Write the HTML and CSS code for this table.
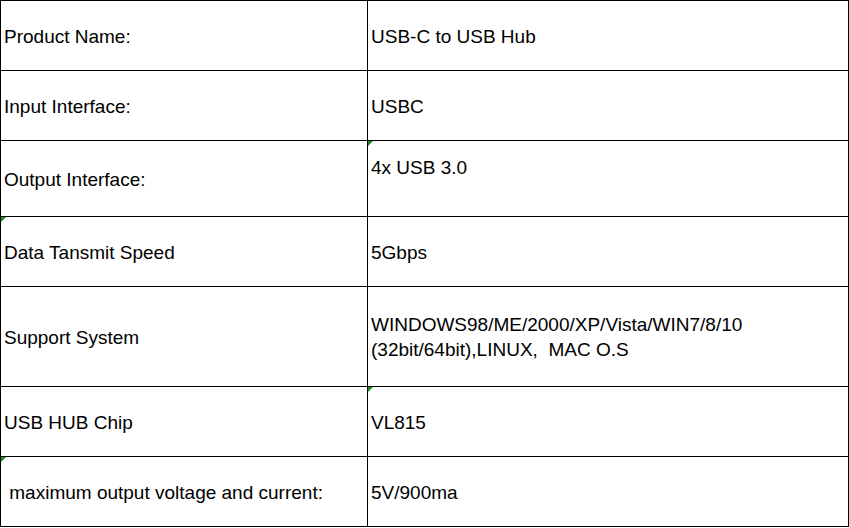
FILE: index.html
```html
<!DOCTYPE html>
<html>
<head>
<meta charset="utf-8">
<link rel="stylesheet" href="styles.css">
</head>
<body>
<table class="spec">
  <colgroup><col class="c1"><col class="c2"></colgroup>
  <tr class="h70"><td>Product Name:</td><td>USB-C to USB Hub</td></tr>
  <tr class="h70"><td>Input Interface:</td><td>USBC</td></tr>
  <tr class="h76"><td>Output Interface:</td><td class="top mark"><span class="tri"></span>4x USB 3.0</td></tr>
  <tr class="h70"><td class="mark"><span class="tri"></span>Data Tansmit Speed</td><td>5Gbps</td></tr>
  <tr class="h100"><td>Support System</td><td>WINDOWS98/ME/2000/XP/Vista/WIN7/8/10<br>(32bit/64bit),LINUX,&nbsp; MAC O.S</td></tr>
  <tr class="h70"><td>USB HUB Chip</td><td class="mark"><span class="tri"></span>VL815</td></tr>
  <tr class="h70"><td class="mark"><span class="tri"></span>&nbsp;maximum output voltage and current:</td><td>5V/900ma</td></tr>
</table>
</body>
</html>
```
FILE: styles.css
```css
html, body {
  margin: 0;
  padding: 0;
  background: #ffffff;
}
.spec {
  border-collapse: collapse;
  table-layout: fixed;
  width: 848px;
  font-family: "Liberation Sans", Arial, sans-serif;
  font-size: 19px;
  line-height: 25px;
  color: #000;
}
.c1 { width: 367px; }
.c2 { width: 481px; }
.spec td {
  border: 1px solid #000;
  padding: 1px 0 0 3px;
  vertical-align: middle;
  white-space: nowrap;
}
.h70 { height: 70px; }
.h76 { height: 76px; }
.h100 { height: 100px; }
.spec td.top {
  vertical-align: top;
  padding-top: 14px;
}
.mark { position: relative; }
.tri {
  position: absolute;
  left: 0;
  top: 0;
  width: 0;
  height: 0;
  border-top: 5px solid #1f8a1f;
  border-right: 5px solid transparent;
}
```
